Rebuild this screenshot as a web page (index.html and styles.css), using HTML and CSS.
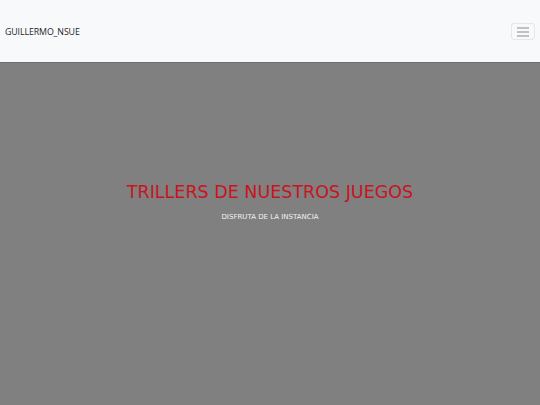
FILE: index.html
```html
<!DOCTYPE html>
<html lang="es">
<head>
<meta charset="utf-8">
<title>GUILLERMO_NSUE</title>
<link rel="stylesheet" href="styles.css">
</head>
<body>
<nav class="navbar">
  <a class="brand" href="#">GUILLERMO_NSUE</a>
  <button class="toggler" type="button" aria-label="Menu">
    <svg width="12" height="10" viewBox="0 0 12 10"><path d="M0 1H12M0 5H12M0 9H12" stroke="#8a8a8a" stroke-width="1.1"/></svg>
  </button>
</nav>
<header class="hero">
  <h1 class="title">TRILLERS DE NUESTROS JUEGOS</h1>
  <p class="subtitle">DISFRUTA DE LA INSTANCIA</p>
</header>
</body>
</html>
```
FILE: styles.css
```css
html, body { margin: 0; padding: 0; height: 100%; }
body { font-family: "Open Sans", "Noto Sans", sans-serif; background: #808080; }
.navbar {
  height: 63px;
  background: #f8f9fa;
  display: flex;
  align-items: center;
  justify-content: space-between;
  padding: 1px 5px 0;
  box-sizing: border-box;
  border-bottom: 1px solid #6e6e6e;
}
.brand {
  color: #212529;
  text-decoration: none;
  font-size: 8.8px;
  letter-spacing: -0.1px;
}
.toggler {
  width: 24px;
  height: 17px;
  padding: 0;
  border: 1px solid #e6e7e9;
  border-radius: 3px;
  background: transparent;
  display: flex;
  align-items: center;
  justify-content: center;
}
.hero {
  height: 342px;
  display: flex;
  flex-direction: column;
  align-items: center;
  justify-content: center;
  text-align: center;
  padding-bottom: 65px;
  box-sizing: border-box;
}
.title {
  margin: 0;
  font-family: "Comic Sans MS", "DejaVu Sans", sans-serif;
  font-weight: normal;
  font-size: 17.5px;
  color: #c8141e;
}
.subtitle {
  margin: 11px 0 0;
  font-family: "Comic Sans MS", "DejaVu Sans", sans-serif;
  font-size: 7px;
  color: #f2f2f2;
}
```
